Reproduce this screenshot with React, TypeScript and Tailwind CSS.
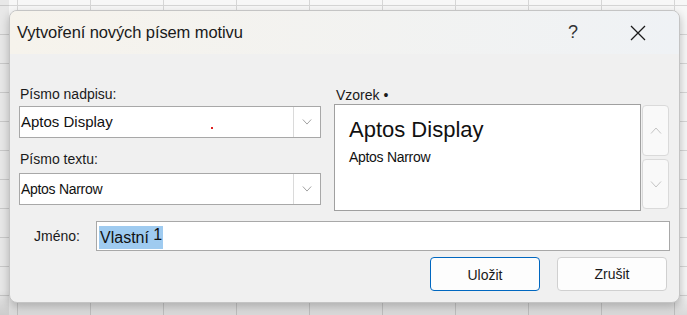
import React from "react";

const Chevron = ({ up = false, color = "#8a8a8a", w = 12 }: { up?: boolean; color?: string; w?: number }) => (
  <svg width={w} height={w / 2 + 1} viewBox="0 0 12 7" fill="none">
    <path d={up ? "M1 6.5 L6 1 L11 6.5" : "M1 0.5 L6 6 L11 0.5"} stroke={color} strokeWidth="1" />
  </svg>
);

export default function App() {
  return (
    <div
      className="relative w-[687px] h-[315px] overflow-hidden bg-[#f7f7f7]"
      style={{
        fontFamily: '"Liberation Sans", Arial, sans-serif',
        backgroundImage:
          "linear-gradient(to right, #d6d6d6 1px, transparent 1px), linear-gradient(to bottom, #d6d6d6 1px, transparent 1px)",
        backgroundSize: "73px 29px",
        backgroundPosition: "17px 5px",
      }}
    >
      <div className="absolute inset-0 bg-[linear-gradient(to_bottom,rgba(0,0,0,0)_0%,rgba(0,0,0,0)_92%,rgba(0,0,0,0.12)_100%)]" />
      <div className="absolute inset-y-0 left-0 w-[9px] bg-[rgba(0,0,0,0.06)]" />
      <div className="absolute left-[9px] top-[10px] w-[671px] h-[293px] rounded-[8px] bg-[#f0f0f0] border border-[#c4c4c4] shadow-[0_4px_10px_rgba(0,0,0,0.25)] overflow-hidden flex flex-col">
        {/* Title bar */}
        <div className="h-[43px] shrink-0 flex items-center bg-[linear-gradient(to_right,#f6f3ec,#eff2f5)] pl-[7px]">
          <div className="text-[16.5px] text-[#1a1a1a] tracking-[-0.1px]">Vytvoření nových písem motivu</div>
          <div className="ml-auto flex items-center">
            <div className="w-[70px] flex justify-center text-[18px] text-[#333] font-light pr-[2px]">?</div>
            <div className="w-[70px] flex justify-center pr-[12px]">
              <svg width="16" height="16" viewBox="0 0 16 16">
                <path d="M1 1 L15 15 M15 1 L1 15" stroke="#1a1a1a" strokeWidth="1.3" />
              </svg>
            </div>
          </div>
        </div>

        {/* Body */}
        <div className="flex pt-[32px] pl-[9px]">
          <div className="w-[302px] flex flex-col">
            <div className="text-[14px] text-[#1a1a1a] leading-[16px] ml-[1px]">Písmo nadpisu:</div>
            <div className="mt-[4px] h-[32px] bg-white border border-[#a8a8a8] flex relative">
              <div className="flex-1 flex items-center pl-[1px] text-[15px] text-[#111]">Aptos Display</div>
              <div className="absolute left-[191px] top-[20px] w-[2px] h-[2px] bg-[#e02020]" />
              <div className="w-[27px] border-l border-[#dadada] flex items-center justify-center">
                <Chevron w={10} color="#909090" />
              </div>
            </div>
            <div className="mt-[13px] text-[14px] text-[#1a1a1a] leading-[16px] ml-[1px]">Písmo textu:</div>
            <div className="mt-[6px] h-[32px] bg-white border border-[#a8a8a8] flex">
              <div className="flex-1 flex items-center pl-[1px] text-[14px] text-[#111] tracking-[-0.3px]">Aptos Narrow</div>
              <div className="w-[27px] border-l border-[#dadada] flex items-center justify-center">
                <Chevron w={10} color="#909090" />
              </div>
            </div>
          </div>

          <div className="ml-[13px] flex flex-col">
            <div className="text-[14px] text-[#1a1a1a] leading-[16px] ml-[2px] mt-[1px]">Vzorek •</div>
            <div className="flex mt-[1px]">
              <div className="w-[307px] h-[107px] bg-white border border-[#a0a0a0] pl-[14px] pt-[10px]">
                <div className="text-[22px] leading-[30px] text-[#111]">Aptos Display</div>
                <div className="text-[14px] leading-[18px] text-[#111] mt-[3px] tracking-[-0.3px]">Aptos Narrow</div>
              </div>
              <div className="ml-[1px] flex flex-col gap-[3px] mt-[1px]">
                <div className="w-[27px] h-[51px] rounded-[4px] border border-[#dadada] bg-[#f9f9f9] flex items-center justify-center">
                  <Chevron up w={12} color="#c4c4c4" />
                </div>
                <div className="w-[27px] h-[50px] rounded-[4px] border border-[#dadada] bg-[#f9f9f9] flex items-center justify-center">
                  <Chevron w={12} color="#c4c4c4" />
                </div>
              </div>
            </div>
          </div>
        </div>

        {/* Name row */}
        <div className="flex items-center mt-[10px] pl-[24px]">
          <div className="text-[14px] text-[#1a1a1a] w-[62px]">Jméno:</div>
          <div className="w-[574px] h-[30px] bg-white border border-[#a8a8a8] flex items-center pl-[2px]">
            <span className="bg-[#9fcbf0] text-[16px] leading-[23px] text-[#111] px-[1px] relative top-[1px]">
              Vlastní <span className="relative -top-[3px]">1</span>
            </span>
          </div>
        </div>

        {/* Buttons */}
        <div className="flex justify-end gap-[17px] mt-[6px] pr-[12px]">
          <div className="w-[110px] h-[34px] rounded-[4px] border border-[#0067c0] bg-[#fdfdfd] flex items-center justify-center text-[14px] text-[#1a1a1a] pt-[3px]">
            Uložit
          </div>
          <div className="w-[110px] h-[34px] rounded-[4px] border border-[#d0d0d0] bg-[#fdfdfd] flex items-center justify-center text-[14px] text-[#1a1a1a]">
            Zrušit
          </div>
        </div>
      </div>
    </div>
  );
}
